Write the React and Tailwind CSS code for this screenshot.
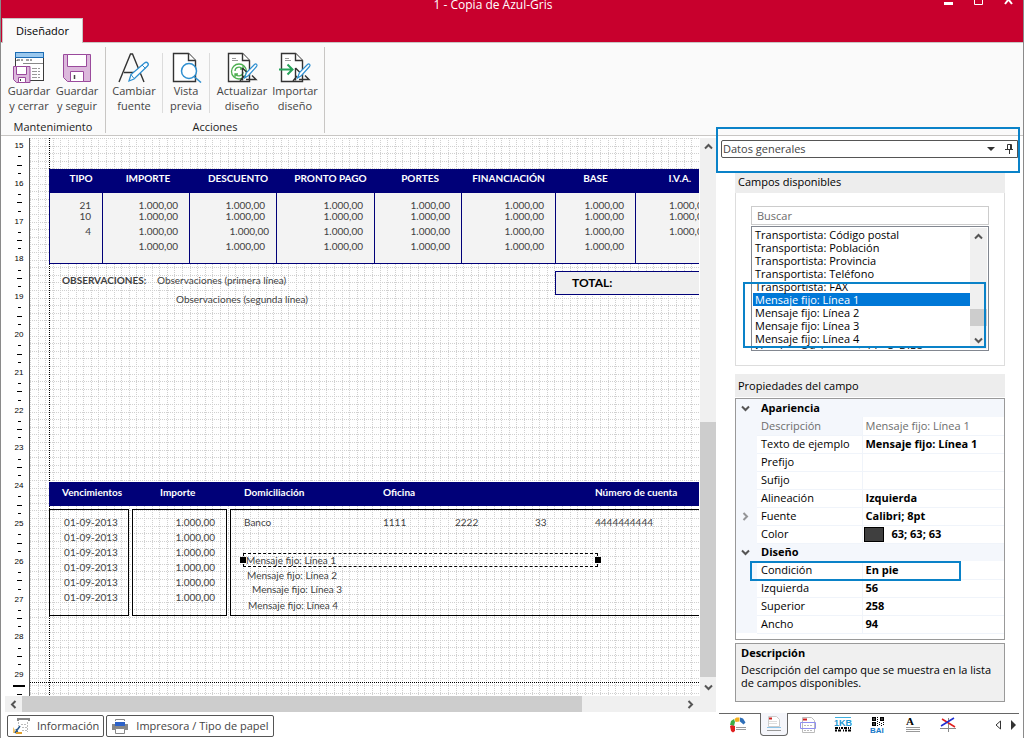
import React, { useState } from 'react';

const SaveCloseIcon = () => (
  <svg width="32" height="32" viewBox="0 0 32 32" fill="none" aria-hidden="true">
    <rect x="2.5" y="1.5" width="28" height="28" fill="#fff" stroke="#3a3a3a" />
    <rect x="2.5" y="1.5" width="28" height="5" fill="#9ac8ee" stroke="#1c6cb4" />
    <path d="M4 9h6M13 9h6M4 9v1" stroke="#444" strokeDasharray="3 1" />
    <path d="M10 12.5h20" stroke="#888" />
    <path d="M19 17.5h9M19 20.5h9M19 23.5h9M19 26.5h9" stroke="#999" strokeDasharray="5 1 2 1" />
    <path d="M.5 15.5h16.500v16H3.500l-3-3z" fill="#dcb8dc" stroke="#9a4a9c" />
    <path d="M3.500 15.500h10v8h-10z" fill="#fff" stroke="#9a4a9c" />
    <path d="M5.500 26.500h7v5h-7z" fill="#fff" stroke="#9a4a9c" />
    <path d="M7.500 28v2" stroke="#444" />
  </svg>
);

const SaveIcon = () => (
  <svg width="32" height="32" viewBox="0 0 32 32" fill="none" aria-hidden="true">
    <path d="M2.500 3.500h27v27h-23l-4-4z" fill="#dcb8dc" stroke="#9a4a9c" />
    <path d="M6.500 3.500h19v12h-19z" fill="#fff" stroke="#9a4a9c" />
    <path d="M9.500 20.500h13v10h-13z" fill="#fff" stroke="#9a4a9c" />
    <path d="M13.500 24v4" stroke="#444" strokeWidth="1.500" />
  </svg>
);

const FontIcon = () => (
  <svg width="32" height="32" viewBox="0 0 32 32" fill="none" aria-hidden="true">
    <path d="M1 31L12.500 3h2L26 31M6 21.500h15" stroke="#333" strokeWidth="1.400" />
    <path d="M11 30l2-6.500L26.500 12c2.500-2 5 1 3 3L16 28z" fill="#fff" stroke="#2f8fd0" strokeWidth="1.300" />
    <path d="M13 23.500l3 4M24 14l3.500 3.500" stroke="#2f8fd0" />
  </svg>
);

const PreviewIcon = () => (
  <svg width="32" height="32" viewBox="0 0 32 32" fill="none" aria-hidden="true">
    <path d="M3.500 2.500h15l7 7v21h-22z" fill="#fff" stroke="#333" strokeWidth="1.400" />
    <path d="M18.500 2.500v7h7" fill="#fff" stroke="#333" strokeWidth="1.400" />
    <circle cx="19" cy="20" r="7.500" fill="#fff" stroke="#2f8fd0" strokeWidth="1.500" />
    <path d="M24 25.500l7 6" stroke="#2f8fd0" strokeWidth="1.500" />
  </svg>
);

const SheetPen = ({ children }) => (
  <svg width="32" height="32" viewBox="0 0 32 32" fill="none" aria-hidden="true">
    <path d="M2.500 2.500h14l7 7v21h-21z" fill="#fff" stroke="#333" strokeWidth="1.400" />
    <path d="M16.500 2.500v7h7" fill="#fff" stroke="#333" strokeWidth="1.400" />
    <path d="M6 7.500h4M6 9.500h6" stroke="#999" />
    {children}
    <path d="M16.500 17v12.500M16.500 17l5 5M20 28.500h10l-4-4M14 30l4-5" fill="none" stroke="#333" strokeWidth="1.400" />
    <path d="M18.500 27l2-5.500 8-8c1.500-1.500 3.500.5 2 2l-8 9z" fill="#fff" stroke="#2f8fd0" strokeWidth="1.200" />
  </svg>
);

const RefreshDesignIcon = () => (
  <SheetPen>
    <circle cx="13" cy="20.500" r="7.500" fill="#fff" stroke="#4caf50" strokeWidth="1.300" />
    <path d="M9 20c0-4 5-5 7-2.500M17 15v3h-3M17 21c0 4-5 5-7.500 2.500M9 26v-3h3" stroke="#4caf50" strokeWidth="1.300" />
  </SheetPen>
);

const ImportDesignIcon = () => (
  <SheetPen>
    <path d="M0 18.500h13M8.500 13.500l5 5-5 5" stroke="#27a35a" strokeWidth="2" />
  </SheetPen>
);

const RibbonButton = ({ icon, lines, width }) => (
  <button type="button" className={`flex flex-col items-center pt-1 text-[#444] ${width}`}>
    {icon}
    <span className="text-center leading-[15px] whitespace-nowrap">
      {lines[0]}
      <br />
      {lines[1]}
    </span>
  </button>
);

const Chevron = ({ className = '' }) => (
  <svg width="9" height="9" viewBox="0 0 9 9" className={className} aria-hidden="true">
    <path d="M1 6.500l3.500-3.500 3.500 3.500" fill="none" stroke="#555" strokeWidth="2" />
  </svg>
);

const Ruler = () => (
  <div className="w-7 shrink-0 overflow-hidden">
    <div className="flex h-[567px] flex-col">
      {[15, 16, 17, 18, 19, 20, 21, 22, 23, 24, 25, 26, 27, 28, 29].map((cm) => (
        <div key={cm} className="flex flex-1 flex-col items-center justify-between pt-[5px] pb-0.5 pl-2">
          <span className="font-['Liberation_Sans'] text-[8px] leading-[6px] text-black">{cm}</span>
          <span className={cm === 29 ? 'h-0.5 w-3 bg-black' : 'h-px w-[3px] bg-black'}></span>
          <span className="h-px w-[5px] bg-black"></span>
          <span className="h-px w-[3px] bg-black"></span>
        </div>
      ))}
    </div>
  </div>
);

const taxColumns = [
  { title: 'TIPO', col: 'w-[53px]', head: 'pl-2.5', values: ['21', '10', '4', ''] },
  { title: 'IMPORTE', col: 'w-[87px]', head: 'pl-1' },
  { title: 'DESCUENTO', col: 'w-[87px]', head: 'pl-2.5', wideRow: 2 },
  { title: 'PRONTO PAGO', col: 'w-[98px]', head: 'pl-2.5' },
  { title: 'PORTES', col: 'w-[87px]', head: 'pl-1' },
  { title: 'FINANCIACIÓN', col: 'w-[94px]', head: 'pl-0' },
  { title: 'BASE', col: 'w-[80px]', head: 'pl-0' },
  { title: 'I.V.A.', col: 'w-[84px]', head: 'pl-1', values: ['1.000,00', '1.000,00', '1.000,00', ''] },
];

const rowHeights = ['h-[18px]', 'h-[11px]', 'h-[15px]', 'h-[15px]'];

const TaxTable = () => (
  <table className="absolute top-[31px] left-[19px] w-[670px] table-fixed border-collapse">
    <thead>
      <tr className="h-6 bg-[#000078] text-white">
        {taxColumns.map((c) => (
          <th key={c.title} className={`border-l border-[#000078] pb-1.5 text-center font-bold whitespace-nowrap ${c.col} ${c.head}`}>{c.title}</th>
        ))}
      </tr>
    </thead>
    <tbody className="border-b border-[#000078] bg-[#f3f3f3]">
      {rowHeights.map((height, row) => (
        <tr key={row} className={height}>
          {taxColumns.map((c) => (
            <td
              key={c.title}
              className={`border-l border-[#000078] text-right align-bottom leading-[11px] ${c.wideRow === row ? 'pr-[7px]' : 'pr-[11px]'}`}
            >
              {c.values ? c.values[row] : '1.000,00'}
            </td>
          ))}
        </tr>
      ))}
      <tr className="h-[11px]">
        {taxColumns.map((c) => (
          <td key={c.title} className="border-l border-[#000078]"></td>
        ))}
      </tr>
    </tbody>
  </table>
);

const dueDates = [1, 2, 3, 4, 5, 6];

const Canvas = () => (
  <div className="relative min-w-0 flex-1 overflow-hidden border-l border-[#555] bg-white font-[Lato,sans-serif] text-[10px] text-[#3f3f3f]">
    <svg className="absolute inset-0 h-full w-full" aria-hidden="true">
      <defs>
        <pattern id="grid" width="38" height="38" patternUnits="userSpaceOnUse">
          <path
            d="M0 .5H38M0 8.500H38M0 15.500H38M0 23.500H38M0 30.500H38M.5 0V38M8.500 0V38M15.500 0V38M23.500 0V38M30.500 0V38"
            stroke="#d0d0d0"
            strokeDasharray="1 1"
          />
        </pattern>
      </defs>
      <rect width="100%" height="100%" fill="url(#grid)" />
      <path d="M19.500 0V600M0 544.500H2000" stroke="#000" strokeDasharray="1 1" />
    </svg>

    <TaxTable />

    <span className="absolute top-[136px] left-8 leading-3 font-bold">OBSERVACIONES:</span>
    <span className="absolute top-[136px] left-[127px] leading-3">Observaciones (primera línea)</span>
    <span className="absolute top-[155px] left-[146px] leading-3">Observaciones (segunda línea)</span>
    <div className="absolute top-[133px] left-[525px] h-6 w-[200px] border border-[#000078] bg-[#efefef] pl-4 text-xs leading-[22px] font-bold text-black">
      TOTAL:
    </div>

    <div className="absolute top-[344px] left-[19px] flex h-6 w-[700px] bg-[#000078] pl-[13px] leading-[21px] font-bold text-white">
      <span className="w-[98px]">Vencimientos</span>
      <span className="w-[84px]">Importe</span>
      <span className="w-[139px]">Domiciliación</span>
      <span className="w-[212px]">Oficina</span>
      <span>Número de cuenta</span>
    </div>
    <div className="absolute top-[371px] left-[19px] flex h-[107px] w-[700px] gap-[3px] leading-[15px]">
      <div className="w-20 border border-black pt-[5px] pl-1 text-center">
        {dueDates.map((d) => <p key={d}>01-09-2013</p>)}
      </div>
      <div className="w-[95px] border border-black pt-[5px] pr-[11px] text-right">
        {dueDates.map((d) => <p key={d}>1.000,00</p>)}
      </div>
      <div className="flex flex-1 border border-black pt-[5px] pl-[13px]">
        <span className="w-[139px]">Banco</span>
        <span className="w-[72px]">1111</span>
        <span className="w-20">2222</span>
        <span className="w-[60px]">33</span>
        <span>4444444444</span>
      </div>
    </div>

    <div className="absolute top-[415px] left-[213px] flex h-[14px] w-[355px] items-center justify-between border border-dashed border-black leading-3">
      <span className="-ml-1 h-1.5 w-1.5 bg-black"></span>
      <span className="flex-1">Mensaje fijo: Línea 1</span>
      <span className="-mr-1 h-1.5 w-1.5 bg-black"></span>
    </div>
    <span className="absolute top-[431px] left-[217px] leading-3">Mensaje fijo: Línea 2</span>
    <span className="absolute top-[445px] left-[222px] leading-3">Mensaje fijo: Línea 3</span>
    <span className="absolute top-[461px] left-[218px] leading-3">Mensaje fijo: Línea 4</span>
  </div>
);

const fields = [
  'Transportista: Código postal',
  'Transportista: Población',
  'Transportista: Provincia',
  'Transportista: Teléfono',
  'Transportista: FAX',
  'Mensaje fijo: Línea 1',
  'Mensaje fijo: Línea 2',
  'Mensaje fijo: Línea 3',
  'Mensaje fijo: Línea 4',
  'Nombre Oficina contable C. DIR3',
];

const FieldList = () => {
  const [selected, setSelected] = useState('Mensaje fijo: Línea 1');

  return (
    <div className="relative flex h-[125px] border border-[#828790] p-px">
      <ul role="listbox" aria-label="Campos disponibles" className="flex-1 overflow-hidden leading-[13px] text-black">
        {fields.map((f) => (
          <li
            key={f}
            role="option"
            aria-selected={f === selected}
            onClick={() => setSelected(f)}
            className={f === selected ? 'bg-[#0078d7] pl-0.5 text-white' : 'pl-0.5'}
          >
            {f}
          </li>
        ))}
      </ul>
      <div className="flex w-[17px] flex-col items-center bg-[#f0f0f0] py-1">
        <Chevron />
        <div className="flex-1"></div>
        <div className="h-[17px] w-full bg-[#cdcdcd]"></div>
        <Chevron className="mt-2.5 rotate-180" />
      </div>
      <div className="pointer-events-none absolute top-[55px] -left-[9px] h-[66px] w-[243px] border-2 border-[#0a82c8]"></div>
    </div>
  );
};

const properties = [
  { group: 'Apariencia' },
  { name: 'Descripción', value: 'Mensaje fijo: Línea 1', disabled: true },
  { name: 'Texto de ejemplo', value: 'Mensaje fijo: Línea 1' },
  { name: 'Prefijo', value: '' },
  { name: 'Sufijo', value: '' },
  { name: 'Alineación', value: 'Izquierda' },
  { name: 'Fuente', value: 'Calibri; 8pt', expandable: true },
  { name: 'Color', value: '63; 63; 63', swatch: true },
  { group: 'Diseño' },
  { name: 'Condición', value: 'En pie' },
  { name: 'Izquierda', value: '56' },
  { name: 'Superior', value: '258' },
  { name: 'Ancho', value: '94' },
];

const PropertyGrid = () => (
  <div className="relative border border-[#999] pb-[5px]">
    <table className="w-full table-fixed border-collapse leading-4 text-black">
      <colgroup>
        <col className="w-[21px]" />
        <col className="w-[105px]" />
        <col />
      </colgroup>
      <tbody>
        {properties.map((p) =>
          p.group ? (
            <tr key={p.group} className="h-[18px] bg-[#f4f7fc]">
              <td><Chevron className="ml-[5px] rotate-180" /></td>
              <th colSpan="2" className="pl-1 text-left font-bold">{p.group}</th>
            </tr>
          ) : (
            <tr key={p.name} className={p.disabled ? 'h-[18px] text-[#6d6d6d]' : 'h-[18px]'}>
              <td className="bg-[#f4f7fc]">
                {p.expandable && <Chevron className="ml-[5px] rotate-90 opacity-60" />}
              </td>
              <th className={`border-b border-[#f0f4fa] pl-1 text-left font-normal whitespace-nowrap ${p.disabled ? 'bg-[#f4f7fc]' : ''}`}>{p.name}</th>
              <td className={`border-b border-l border-[#f0f4fa] pl-[3px] whitespace-nowrap ${p.disabled ? '' : 'font-bold'}`}>
                {p.swatch ? (
                  <span className="-ml-0.5 flex items-center gap-2">
                    <span className="h-[15px] w-5 border border-black bg-[#3f3f3f]"></span>
                    {p.value}
                  </span>
                ) : p.value}
              </td>
            </tr>
          )
        )}
      </tbody>
    </table>
    <div className="pointer-events-none absolute top-[162px] left-[14px] h-5 w-[211px] border-2 border-[#0a82c8]"></div>
  </div>
);

const tabIcons = [
  {
    name: 'Colores',
    art: (
      <>
        <path d="M0 9l2-1 3 1v5l-2 1.500-2-1.500z" fill="#e02020" />
        <path d="M0 8l1-4 3-2 1 3-1 4-2-1z" fill="#3cae48" />
        <path d="M4.500 2l2-1.500h3v4l-4 .5z" fill="#f2b01e" />
        <path d="M10 .5l3 1 2.500 4-2 2-3.500-3z" fill="#2f6fb8" />
        <path d="M6 10.500h10M6 12.500h10" stroke="#999" />
      </>
    ),
  },
  {
    name: 'Datos generales',
    art: (
      <>
        <path d="M2.500 .5h8l3 3v7h-11z" fill="#fff" stroke="#ccc" />
        <path d="M3 2.500h3" stroke="#c22" strokeWidth="2" />
        <path d="M3 7.500h8M3 5.500h8" stroke="#ddd" />
        <path d="M1 11.500h14" stroke="#8cc4e8" />
        <path d="M1 14.500h14" stroke="#999" />
      </>
    ),
  },
  {
    name: 'Bandas',
    art: (
      <>
        <path d="M2.500 .5h9l3 3v12h-12z" fill="#fff" stroke="#bbb" />
        <path d="M3 2.500h4" stroke="#c22" strokeWidth="2" />
        <path d="M4 8.500h8M4 13.500h8" stroke="#bbb" strokeDasharray="2 1" />
        <path d="M.5 5.500h15v6H.5z" stroke="#8f8ff0" />
      </>
    ),
  },
  {
    name: 'Código de barras',
    art: (
      <>
        <path d="M0 .5h16" stroke="#3fb0e0" />
        <text x="-1" y="9" fontSize="9" fontWeight="bold" fontFamily="Liberation Sans" fill="#1c96d2">1KB</text>
        <path d="M0 11h16" stroke="#000" strokeWidth="2" strokeDasharray="3 1 1 1 2 1" />
        <path d="M0 13.500h16" stroke="#000" strokeWidth="2" strokeDasharray="2 1 3 2 1 1" />
      </>
    ),
  },
  {
    name: 'Código QR',
    art: (
      <>
        <path d="M2 0h4v4H2zM10 0h4v4h-4zM2 5h4v4H2z" fill="#000" />
        <path d="M3.500 1.500h1v1h-1zM11.500 1.500h1v1h-1zM3.500 6.500h1v1h-1z" fill="#fff" />
        <path d="M7.500 0v9M9.500 5v4M11.500 6v3M13.500 5v4" stroke="#000" strokeDasharray="1 1" />
        <text x="0" y="16" fontSize="8" fontWeight="bold" fontFamily="Liberation Sans" fill="#1878c8">BAI</text>
      </>
    ),
  },
  {
    name: 'Texto',
    art: (
      <>
        <text x="1" y="8" fontSize="11" fontWeight="bold" fontFamily="Liberation Serif" fill="#000">A</text>
        <path d="M1 10.500h14M1 12.500h14M1 14.500h14" stroke="#999" />
      </>
    ),
  },
  {
    name: 'Líneas',
    art: (
      <>
        <path d="M0 11.500h16M8.500 1v14" stroke="#888" />
        <path d="M2 2l13 8" stroke="#e02020" strokeWidth="1.500" />
        <path d="M1 9L14 1" stroke="#2030d0" strokeWidth="1.500" />
      </>
    ),
  },
];

const TabStrip = () => (
  <div className="mt-[11px] mr-1 ml-[3px] flex items-start border-t border-[#666]">
    <div role="tablist" className="flex flex-1">
      {tabIcons.map((t, i) => (
        <button
          key={t.name}
          type="button"
          role="tab"
          aria-label={t.name}
          aria-selected={i === 1}
          className={
            i === 1
              ? 'relative z-10 -mt-px mr-0.5 flex h-[23px] w-7 items-center justify-center rounded-b border border-t-0 border-[#666] bg-[#f5f6fb]'
              : i === 0
                ? 'flex h-[22px] w-[41px] items-center justify-center pr-1'
                : 'flex h-[22px] w-[35px] items-center justify-center'
          }
        >
          <svg width="18" height="18" viewBox="-1 -1 18 18" fill="none" aria-hidden="true">{t.art}</svg>
        </button>
      ))}
    </div>
    <button type="button" aria-label="Anterior" className="flex h-[22px] items-center pr-1.5">
      <svg width="7" height="10" viewBox="0 0 7 10"><path d="M5.500 1v8L1 5z" fill="#fff" stroke="#333" /></svg>
    </button>
    <button type="button" aria-label="Siguiente" className="flex h-[22px] items-center pr-0.5 pl-0.5">
      <svg width="7" height="10" viewBox="0 0 7 10"><path d="M1 0v10l5-5z" fill="#333" /></svg>
    </button>
  </div>
);

const SidePanel = () => (
  <aside className="relative flex w-[307px] shrink-0 flex-col">
    <div className="pointer-events-none absolute -top-[9px] left-0 z-10 h-[46px] w-[304px] border-2 border-[#0a82c8]"></div>
    <div className="mt-1 ml-[5px] flex h-[18px] w-[297px] items-center rounded-l-xs border border-[#555]">
      <select aria-label="Panel" className="min-w-0 flex-1 appearance-none bg-transparent pl-px leading-4 text-[#444]">
        <option>Datos generales</option>
      </select>
      <svg width="8" height="4" viewBox="0 0 8 4" aria-hidden="true"><path d="M0 0h8L4 4z" fill="#333" /></svg>
      <button type="button" aria-label="Fijar panel" className="mr-[3px] ml-2.5">
        <svg width="9" height="10" viewBox="0 0 9 10" fill="none" stroke="#333"><path d="M2.500 .5h4v5h-4zM5.500 .5v5M0 5.500h8M4.500 6v4" /></svg>
      </button>
    </div>

    <section className="mt-[13px] mr-[18px] ml-[19px] border border-t-0 border-[#ddd]">
      <h2 className="-mx-px bg-[#ededed] pl-[3px] leading-[22px] text-black">Campos disponibles</h2>
      <div className="px-[15px] pt-[13px] pb-3.5">
        <input
          type="text"
          aria-label="Buscar"
          placeholder="Buscar"
          className="mb-px block h-[19px] w-full border border-[#ccc] pl-[5px] placeholder:text-[#6d6d6d]"
        />
        <FieldList />
      </div>
    </section>

    <section className="mt-[8px] mr-[18px] ml-[19px]">
      <h2 className="mb-px bg-[#ededed] pl-[3px] leading-[23px] text-black">Propiedades del campo</h2>
      <PropertyGrid />
      <div className="mt-[3px] h-[59px] border border-[#999] bg-[#f0f0f0] px-[5px] pt-px text-black">
        <p className="mb-[3px] leading-[15px] font-bold">Descripción</p>
        <p className="leading-[13px]">Descripción del campo que se muestra en la lista de campos disponibles.</p>
      </div>
    </section>

    <TabStrip />
  </aside>
);

export default function App() {
  return (
    <div className="flex h-screen flex-col overflow-hidden border-x border-[#8a8a8a] bg-white font-['Open_Sans','Noto_Sans',sans-serif] text-[11px]">
      <header className="bg-[#c8002d]">
        <div className="flex h-[18px] items-start pr-2.5 pl-[41px] text-white">
          <h1 className="flex-1 text-center text-xs leading-[9px]">1 - Copia de Azul-Gris</h1>
          <div className="flex gap-[21px]">
            <button type="button" aria-label="Minimizar" className="block">
              <svg width="9" height="8" viewBox="0 0 9 8"><path d="M0 3.500h9" stroke="#fff" strokeWidth="3" /></svg>
            </button>
            <button type="button" aria-label="Maximizar" className="block">
              <svg width="9" height="8" viewBox="0 0 9 8" fill="none"><path d="M.5-3h8v7.500h-8z" stroke="#fff" /></svg>
            </button>
            <button type="button" aria-label="Cerrar" className="block">
              <svg width="9" height="8" viewBox="0 0 9 8"><path d="M1-5l7 9M8-5L1 4" stroke="#fff" strokeWidth="2" /></svg>
            </button>
          </div>
        </div>
        <div className="flex pl-px">
          <button type="button" className="relative z-10 -mb-px h-[25px] w-[81px] border border-b-0 border-[#c8c6c4] bg-[#fafafa] text-black">
            Diseñador
          </button>
        </div>
      </header>

      <nav className="flex border-y border-[#c8c6c4] bg-[#fafafa] pt-1 pb-0.5">
        <div className="flex flex-col border-r border-[#c8c6c4] pr-1 pl-1">
          <div className="flex flex-1 pb-2">
            <RibbonButton icon={<SaveCloseIcon />} lines={['Guardar', 'y cerrar']} width="w-12" />
            <RibbonButton icon={<SaveIcon />} lines={['Guardar', 'y seguir']} width="w-12" />
          </div>
          <span className="text-center leading-3 text-[#222]">Mantenimiento</span>
        </div>
        <div className="flex flex-col border-r border-[#c8c6c4] pr-1">
          <div className="flex flex-1 pb-2">
            <RibbonButton icon={<FontIcon />} lines={['Cambiar', 'fuente']} width="w-14" />
            <span className="mt-1.5 w-px bg-[#dcdcdc]"></span>
            <RibbonButton icon={<PreviewIcon />} lines={['Vista', 'previa']} width="w-[46px]" />
            <span className="mt-1.5 mr-1 w-px bg-[#dcdcdc]"></span>
            <RibbonButton icon={<RefreshDesignIcon />} lines={['Actualizar', 'diseño']} width="w-14" />
            <RibbonButton icon={<ImportDesignIcon />} lines={['Importar', 'diseño']} width="w-[50px]" />
          </div>
          <span className="pl-1 text-center leading-3 text-[#222]">Acciones</span>
        </div>
      </nav>

      <main className="flex min-h-0 flex-1">
        <div className="flex min-w-0 flex-1 flex-col">
          <div className="flex min-h-0 flex-1 pt-0.5">
            <Ruler />
            <Canvas />
            <div className="ml-px flex w-4 flex-col items-center bg-[#f0f0f0] py-1">
              <Chevron />
              <div className="flex-1"></div>
              <div className="h-[255px] w-full bg-[#cdcdcd]"></div>
              <Chevron className="mt-1.5 rotate-180" />
            </div>
          </div>
          <div className="ml-1 flex h-4 items-center bg-[#f0f0f0] pl-1">
            <Chevron className="-rotate-90" />
            <div className="ml-1 h-full w-[560px] bg-[#cdcdcd]"></div>
            <div className="flex-1"></div>
            <Chevron className="mr-[21px] rotate-90" />
          </div>
          <div className="flex gap-0.5 pt-[3px] pb-px pl-1.5 text-[#444]">
            <button type="button" className="flex h-[22px] items-center gap-1.5 rounded-xs border border-[#555] pr-1 pl-[5px]">
              <svg width="18" height="16" viewBox="0 0 18 16" fill="none" aria-hidden="true">
                <path d="M5 3V1h11v2" stroke="#888" strokeWidth="2" />
                <path d="M5.500 4v4M8 6.500h6M9 9.500h5M9 12.500h5M14.500 4v10" stroke="#bbb" strokeDasharray="2 1" />
                <path d="M0 9v6h4z" fill="#f2c46c" />
                <path d="M2 15l5-7M5 15l-2-4" stroke="#2a5a8a" strokeWidth="1.500" />
                <path d="M3 15h6" stroke="#e0a030" strokeWidth="2" />
              </svg>
              Información
            </button>
            <button type="button" className="flex h-[22px] items-center gap-2 rounded-xs border border-[#555] pr-1 pl-[5px]">
              <svg width="16" height="15" viewBox="0 0 16 15" fill="none" aria-hidden="true">
                <path d="M3.500 2V.5h9V2" stroke="#888" />
                <path d="M0 5h16v6H0z" fill="#888" />
                <path d="M3 3h10v4H3z" fill="#2d62c8" />
                <path d="M3.500 9.500h9v5h-9z" fill="#fff" stroke="#888" />
              </svg>
              Impresora / Tipo de papel
            </button>
          </div>
        </div>
        <SidePanel />
      </main>
    </div>
  );
}
